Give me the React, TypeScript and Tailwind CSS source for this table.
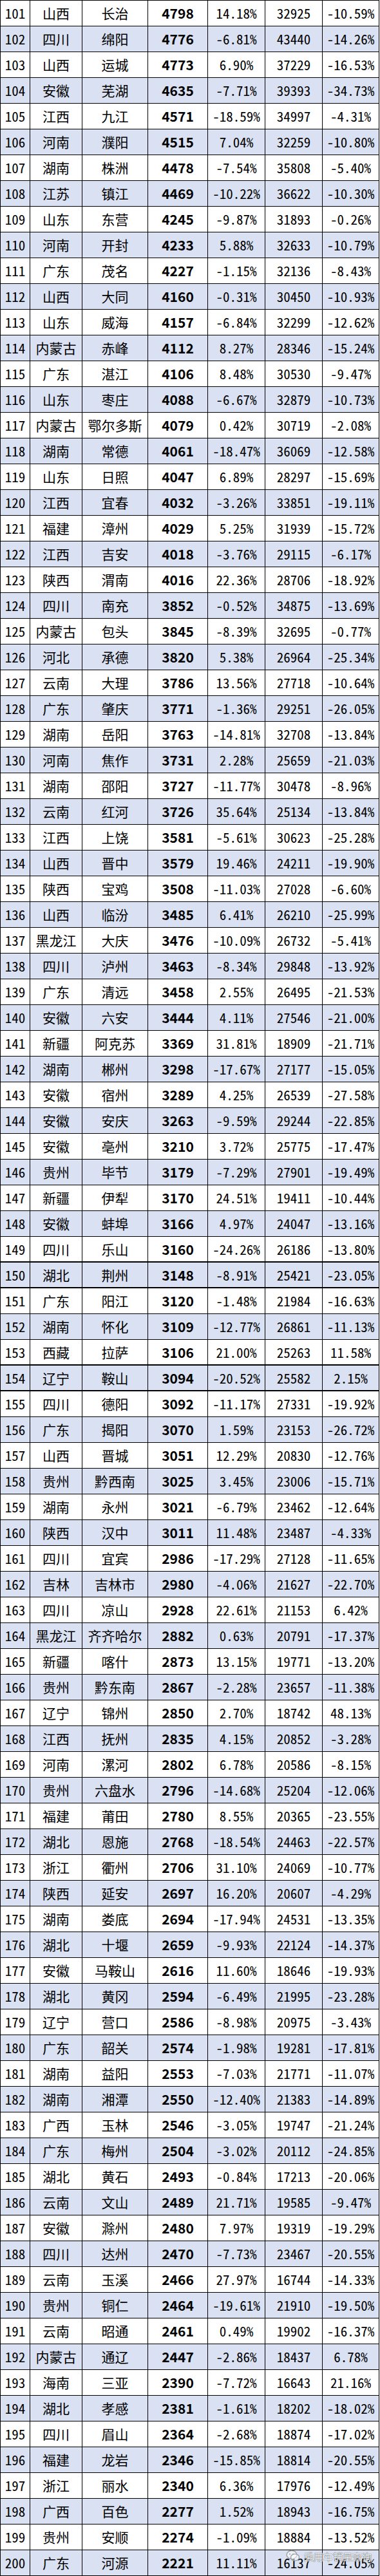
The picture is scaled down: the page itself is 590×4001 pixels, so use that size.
import React from "react";

const DATA = `101 山西 长治 4798 14.18% 32925 -10.59%
102 四川 绵阳 4776 -6.81% 43440 -14.26%
103 山西 运城 4773 6.90% 37229 -16.53%
104 安徽 芜湖 4635 -7.71% 39393 -34.73%
105 江西 九江 4571 -18.59% 34997 -4.31%
106 河南 濮阳 4515 7.04% 32259 -10.80%
107 湖南 株洲 4478 -7.54% 35808 -5.40%
108 江苏 镇江 4469 -10.22% 36622 -10.30%
109 山东 东营 4245 -9.87% 31893 -0.26%
110 河南 开封 4233 5.88% 32633 -10.79%
111 广东 茂名 4227 -1.15% 32136 -8.43%
112 山西 大同 4160 -0.31% 30450 -10.93%
113 山东 威海 4157 -6.84% 32299 -12.62%
114 内蒙古 赤峰 4112 8.27% 28346 -15.24%
115 广东 湛江 4106 8.48% 30530 -9.47%
116 山东 枣庄 4088 -6.67% 32879 -10.73%
117 内蒙古 鄂尔多斯 4079 0.42% 30719 -2.08%
118 湖南 常德 4061 -18.47% 36069 -12.58%
119 山东 日照 4047 6.89% 28297 -15.69%
120 江西 宜春 4032 -3.26% 33851 -19.11%
121 福建 漳州 4029 5.25% 31939 -15.72%
122 江西 吉安 4018 -3.76% 29115 -6.17%
123 陕西 渭南 4016 22.36% 28706 -18.92%
124 四川 南充 3852 -0.52% 34875 -13.69%
125 内蒙古 包头 3845 -8.39% 32695 -0.77%
126 河北 承德 3820 5.38% 26964 -25.34%
127 云南 大理 3786 13.56% 27718 -10.64%
128 广东 肇庆 3771 -1.36% 29251 -26.05%
129 湖南 岳阳 3763 -14.81% 32708 -13.84%
130 河南 焦作 3731 2.28% 25659 -21.03%
131 湖南 邵阳 3727 -11.77% 30478 -8.96%
132 云南 红河 3726 35.64% 25134 -13.84%
133 江西 上饶 3581 -5.61% 30623 -25.28%
134 山西 晋中 3579 19.46% 24211 -19.90%
135 陕西 宝鸡 3508 -11.03% 27028 -6.60%
136 山西 临汾 3485 6.41% 26210 -25.99%
137 黑龙江 大庆 3476 -10.09% 26732 -5.41%
138 四川 泸州 3463 -8.34% 29848 -13.92%
139 广东 清远 3458 2.55% 26495 -21.53%
140 安徽 六安 3444 4.11% 27546 -21.00%
141 新疆 阿克苏 3369 31.81% 18909 -21.71%
142 湖南 郴州 3298 -17.67% 27177 -15.05%
143 安徽 宿州 3289 4.25% 26539 -27.58%
144 安徽 安庆 3263 -9.59% 29244 -22.85%
145 安徽 亳州 3210 3.72% 25775 -17.47%
146 贵州 毕节 3179 -7.29% 27901 -19.49%
147 新疆 伊犁 3170 24.51% 19411 -10.44%
148 安徽 蚌埠 3166 4.97% 24047 -13.16%
149 四川 乐山 3160 -24.26% 26186 -13.80%
150 湖北 荆州 3148 -8.91% 25421 -23.05%
151 广东 阳江 3120 -1.48% 21984 -16.63%
152 湖南 怀化 3109 -12.77% 26861 -11.13%
153 西藏 拉萨 3106 21.00% 25263 11.58%
154 辽宁 鞍山 3094 -20.52% 25582 2.15%
155 四川 德阳 3092 -11.17% 27331 -19.92%
156 广东 揭阳 3070 1.59% 23153 -26.72%
157 山西 晋城 3051 12.29% 20830 -12.76%
158 贵州 黔西南 3025 3.45% 23006 -15.71%
159 湖南 永州 3021 -6.79% 23462 -12.64%
160 陕西 汉中 3011 11.48% 23487 -4.33%
161 四川 宜宾 2986 -17.29% 27128 -11.65%
162 吉林 吉林市 2980 -4.06% 21627 -22.70%
163 四川 凉山 2928 22.61% 21153 6.42%
164 黑龙江 齐齐哈尔 2882 0.63% 20791 -17.37%
165 新疆 喀什 2873 13.15% 19771 -13.20%
166 贵州 黔东南 2867 -2.28% 23657 -11.38%
167 辽宁 锦州 2850 2.70% 18742 48.13%
168 江西 抚州 2835 4.15% 20852 -3.28%
169 河南 漯河 2802 6.78% 20586 -8.15%
170 贵州 六盘水 2796 -14.68% 25204 -12.06%
171 福建 莆田 2780 8.55% 20365 -23.55%
172 湖北 恩施 2768 -18.54% 24463 -22.57%
173 浙江 衢州 2706 31.10% 24069 -10.77%
174 陕西 延安 2697 16.20% 20607 -4.29%
175 湖南 娄底 2694 -17.94% 24531 -13.35%
176 湖北 十堰 2659 -9.93% 22124 -14.37%
177 安徽 马鞍山 2616 11.60% 18646 -19.93%
178 湖北 黄冈 2594 -6.49% 21995 -23.28%
179 辽宁 营口 2586 -8.98% 20975 -3.43%
180 广东 韶关 2574 -1.98% 19281 -17.81%
181 湖南 益阳 2553 -7.03% 21771 -11.07%
182 湖南 湘潭 2550 -12.40% 21383 -14.89%
183 广西 玉林 2546 -3.05% 19747 -21.24%
184 广东 梅州 2504 -3.02% 20112 -24.85%
185 湖北 黄石 2493 -0.84% 17213 -20.06%
186 云南 文山 2489 21.71% 19585 -9.47%
187 安徽 滁州 2480 7.97% 19319 -19.29%
188 四川 达州 2470 -7.73% 23467 -20.55%
189 云南 玉溪 2466 27.97% 16744 -14.33%
190 贵州 铜仁 2464 -19.61% 21910 -19.50%
191 云南 昭通 2461 0.49% 19902 -16.37%
192 内蒙古 通辽 2447 -2.86% 18437 6.78%
193 海南 三亚 2390 -7.72% 16643 21.16%
194 湖北 孝感 2381 -1.61% 18202 -18.02%
195 四川 眉山 2364 -2.68% 18874 -17.02%
196 福建 龙岩 2346 -15.85% 18814 -20.55%
197 浙江 丽水 2340 6.36% 17976 -12.49%
198 广西 百色 2277 1.52% 18943 -16.75%
199 贵州 安顺 2274 -1.09% 18884 -13.52%
200 广东 河源 2221 11.11% 16137 -24.05%`;

const rows = DATA.split("\n").map((l) => l.trim().split(" "));
const THICK = new Set(["149", "150", "153", "154"]);

const cellBase = "flex items-center justify-center border-r border-black whitespace-nowrap overflow-visible";
const num = "[font-feature-settings:'hwid']";

export default function App() {
  return (
    <div className="relative w-[590px] h-[4001px] bg-white font-['Noto_Sans_CJK_SC',sans-serif] text-black text-[21px] leading-none">
      <div className="w-[589px] border-l border-t border-black">
        {rows.map((r) => {
          const even = Number(r[0]) % 2 === 0;
          const thick = THICK.has(r[0]);
          return (
            <div
              key={r[0]}
              className={
                "grid grid-cols-[46px_81px_102px_93px_89px_89px_88px] h-10 border-black " +
                (thick ? "border-b-2 " : "border-b ") +
                (even ? "bg-[#D9E1F2]" : "bg-white")
              }
            >
              <div className={cellBase + " " + num}>{r[0]}</div>
              <div className={cellBase}>{r[1]}</div>
              <div className={cellBase}>{r[2]}</div>
              <div className={cellBase + " font-bold"}>{r[3]}</div>
              <div className={cellBase + " " + num}>{r[4]}</div>
              <div className={cellBase + " " + num}>{r[5]}</div>
              <div className={cellBase + " " + num}>{r[6]}</div>
            </div>
          );
        })}
      </div>
      <div className="absolute left-[444px] top-[3960px] flex items-center gap-[6px] pointer-events-none">
        <svg width="22" height="20" viewBox="0 0 22 20" fill="none">
          <ellipse cx="9" cy="8" rx="8" ry="6.5" stroke="#9a9a9a" strokeWidth="1.3" fill="rgba(255,255,255,0.5)" />
          <ellipse cx="14" cy="12" rx="6.5" ry="5.2" stroke="#9a9a9a" strokeWidth="1.3" fill="rgba(255,255,255,0.5)" />
          <circle cx="6" cy="7" r="0.9" fill="#9a9a9a" />
          <circle cx="11" cy="7" r="0.9" fill="#9a9a9a" />
        </svg>
        <span className="text-[15px] text-white/90 [text-shadow:0_0_1px_#555,0_0_1px_#555]">乘用车销量查询</span>
      </div>
    </div>
  );
}
